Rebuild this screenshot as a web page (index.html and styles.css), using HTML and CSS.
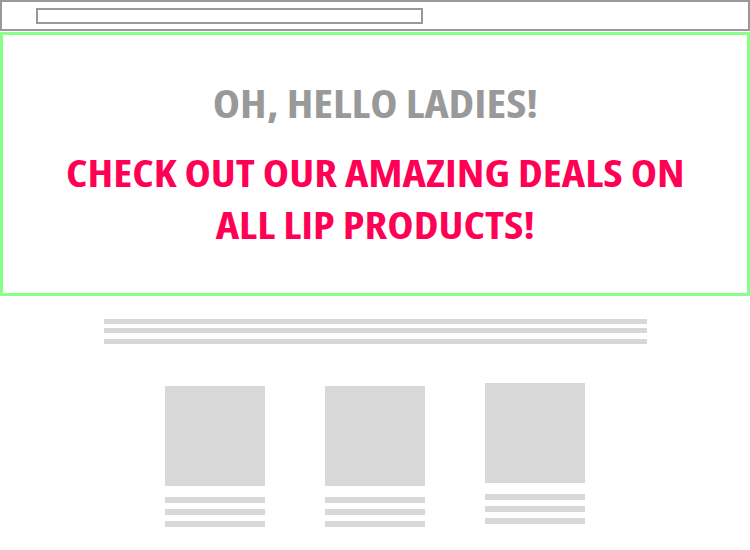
FILE: index.html
```html
<!DOCTYPE html>
<html>
<head>
<meta charset="utf-8">
<link rel="stylesheet" href="styles.css">
</head>
<body>
<header class="topbar">
  <div class="search"></div>
</header>
<section class="hero">
  <h1 class="hello"><span class="wide">OH, HELLO LADIES!</span></h1>
  <h2 class="deal"><span class="wide wider">CHECK OUT OUR AMAZING DEALS ON<br>ALL LIP PRODUCTS!</span></h2>
</section>
<section class="intro">
  <div class="line"></div>
  <div class="line l2"></div>
  <div class="line l3"></div>
</section>
<section class="products">
  <div class="card">
    <div class="thumb"></div>
    <div class="bar"></div>
    <div class="bar"></div>
    <div class="bar"></div>
  </div>
  <div class="card">
    <div class="thumb"></div>
    <div class="bar"></div>
    <div class="bar"></div>
    <div class="bar"></div>
  </div>
  <div class="card raised">
    <div class="thumb"></div>
    <div class="bar"></div>
    <div class="bar"></div>
    <div class="bar"></div>
  </div>
</section>
</body>
</html>
```
FILE: styles.css
```css
html, body {
  margin: 0;
  padding: 0;
  background: #fff;
}
body {
  width: 750px;
  height: 550px;
  overflow: hidden;
  font-family: "Open Sans", "DejaVu Sans", sans-serif;
}
.topbar {
  box-sizing: border-box;
  height: 31px;
  border: 2px solid #999;
  padding: 6px 0 0 34px;
}
.search {
  box-sizing: border-box;
  width: 387px;
  height: 16px;
  border: 2px solid #999;
}
.hero {
  box-sizing: border-box;
  margin-top: 1px;
  height: 264px;
  border: 3px solid #88ff88;
  text-align: center;
  padding-top: 44px;
}
.wide {
  display: inline-block;
  transform: scaleX(1.15);
}
.wider {
  transform: scaleX(1.17);
}
.hello {
  margin: 0;
  font-size: 40px;
  line-height: 48px;
  font-weight: 700;
  font-stretch: 75%;
  color: #999;
}
.deal {
  margin: 19px 0 0;
  font-size: 38px;
  line-height: 52px;
  font-weight: 700;
  font-stretch: 75%;
  color: #ff0055;
}
.intro {
  margin: 23px 0 0 104px;
  width: 543px;
  display: flex;
  flex-direction: column;
}
.line {
  height: 5px;
  background: #d8d8d8;
}
.l2 { margin-top: 4px; }
.l3 { margin-top: 6px; }
.products {
  display: flex;
  justify-content: center;
  align-items: flex-start;
  gap: 60px;
  margin-top: 42px;
}
.card {
  width: 100px;
  display: flex;
  flex-direction: column;
}
.card.raised {
  margin-top: -3px;
}
.thumb {
  height: 100px;
  background: #d8d8d8;
  margin-bottom: 11px;
}
.bar {
  height: 6px;
  background: #d8d8d8;
  margin-bottom: 6px;
}
```
